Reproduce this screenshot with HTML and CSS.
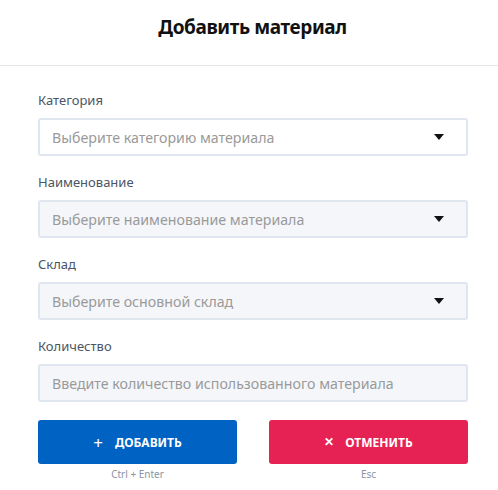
FILE: index.html
```html
<!DOCTYPE html>
<html lang="ru">
<head>
<meta charset="utf-8">
<link rel="stylesheet" href="styles.css">
</head>
<body>
<div class="modal">
  <header class="head"><h1 class="title">Добавить материал</h1></header>
  <form class="form">
    <div class="field">
      <label class="label">Категория</label>
      <div class="input white"><span class="ph">Выберите категорию материала</span><span class="caret"></span></div>
    </div>
    <div class="field">
      <label class="label">Наименование</label>
      <div class="input"><span class="ph">Выберите наименование материала</span><span class="caret"></span></div>
    </div>
    <div class="field">
      <label class="label">Склад</label>
      <div class="input"><span class="ph">Выберите основной склад</span><span class="caret"></span></div>
    </div>
    <div class="field">
      <label class="label">Количество</label>
      <div class="input"><span class="ph">Введите количество использованного материала</span></div>
    </div>
    <div class="actions">
      <div class="action">
        <button type="button" class="btn blue"><span class="ico">+</span>Добавить</button>
        <span class="hint">Ctrl + Enter</span>
      </div>
      <div class="action">
        <button type="button" class="btn red"><span class="ico x">✕</span>Отменить</button>
        <span class="hint">Esc</span>
      </div>
    </div>
  </form>
</div>
</body>
</html>
```
FILE: styles.css
```css
* { box-sizing: border-box; }
html, body { margin: 0; padding: 0; background: #fff; }
body { font-family: "Noto Sans", "Open Sans", sans-serif; width: 498px; }
.head {
  height: 66px;
  border-bottom: 1px solid #e6e6e6;
  display: flex;
  align-items: center;
  justify-content: center;
}
.title {
  margin: 0;
  font-size: 19px;
  font-weight: 700;
  color: #111;
  letter-spacing: -0.4px;
  padding: 0 0 12px 7px;
}
.form {
  padding: 24px 0 0 38px;
  width: 468px;
  display: flex;
  flex-direction: column;
}
.field { display: flex; flex-direction: column; margin-bottom: 16px; }
.label {
  font-size: 13px;
  color: #4a5565;
  line-height: 20px;
  margin-bottom: 8px;
}
.input {
  height: 38px;
  border: 2px solid #dfe6ef;
  border-radius: 3px;
  background: #f4f6fa;
  display: flex;
  align-items: center;
  justify-content: space-between;
  padding: 0 22px 0 12px;
}
.input.white { background: #fff; }
.ph { font-size: 14.2px; color: #9a9a9a; }
.caret {
  width: 0; height: 0;
  border-left: 5px solid transparent;
  border-right: 5px solid transparent;
  border-top: 6px solid #111;
}
.actions { display: flex; gap: 32px; margin-top: 2px; }
.action { width: 199px; display: flex; flex-direction: column; align-items: center; }
.btn {
  width: 199px;
  height: 44px;
  border: none;
  border-radius: 3px;
  color: #fff;
  font-family: "Noto Sans", sans-serif;
  font-weight: 700;
  font-size: 12px;
  text-transform: uppercase;
  display: flex;
  align-items: center;
  justify-content: center;
}
.btn.blue { background: #0062c3; }
.btn.red { background: #e52253; }
.ico { font-size: 17px; font-weight: 400; margin-right: 12px; line-height: 1; }
.ico.x { font-size: 12px; font-weight: 700; margin-right: 11px; }
.hint { font-size: 10px; color: #8a94a3; margin-top: 3px; }
```
